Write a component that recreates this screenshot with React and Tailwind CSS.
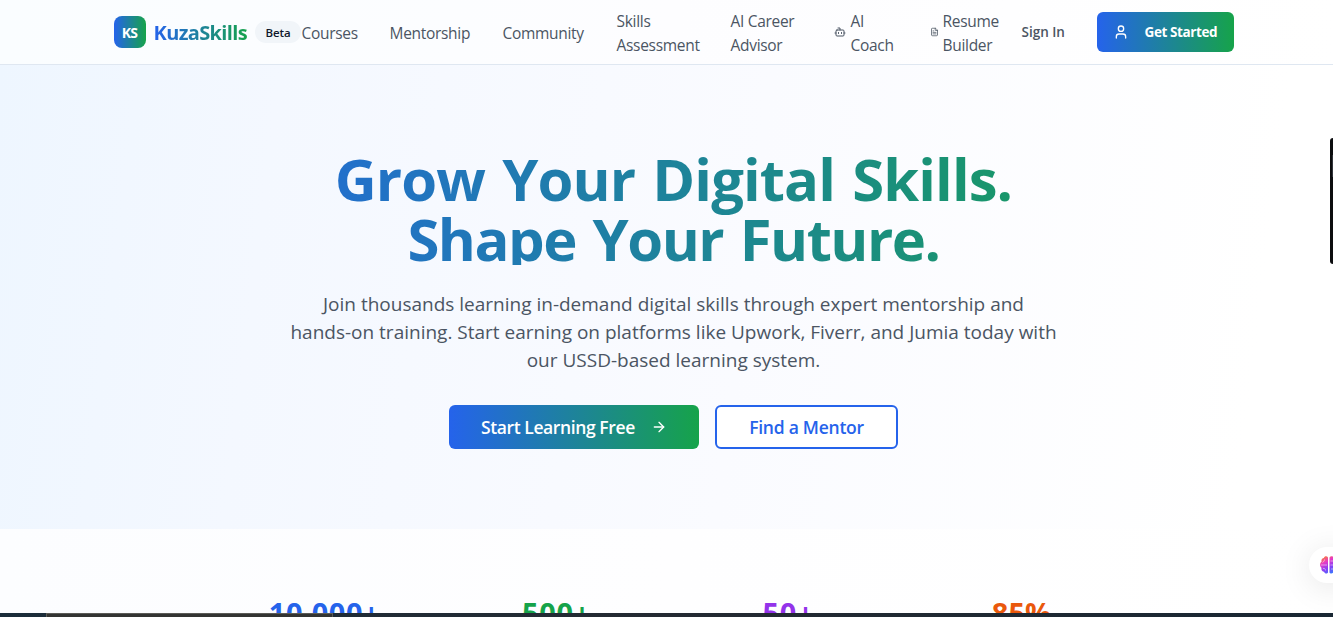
import { ArrowRight, Bot, FileText, User } from 'lucide-react';

const links = [
  { lines: ['Courses'], width: 'w-[88px]' },
  { lines: ['Mentorship'], width: 'w-[113px]' },
  { lines: ['Community'], width: 'w-[114px]' },
  { lines: ['Skills', 'Assessment'], width: 'w-[114px]' },
  { lines: ['AI Career', 'Advisor'], width: 'w-[103px]' },
  { lines: ['AI', 'Coach'], width: 'w-[96px]', icon: <Bot className="w-3 h-3 mr-[5px] shrink-0" /> },
  { lines: ['Resume', 'Builder'], width: 'w-[91px]', icon: <FileText className="w-[9px] h-3 mr-1 shrink-0" /> },
];

const stats = [
  { value: '10,000+', label: 'Active Learners', color: 'text-[#2563eb] pr-0.5 tracking-[0.5px]' },
  { value: '500+', label: 'Expert Mentors', color: 'text-[#16a34a] pr-0.5 tracking-[0.7px]' },
  { value: '50+', label: 'Courses', color: 'text-[#9333ea] pr-0.5 tracking-[0.7px]' },
  { value: '85%', label: 'Success Rate', color: 'text-[#ea580c]' },
];

function Header() {
  return (
    <header className="h-[65px] border-b border-[#dfe7f1] bg-linear-to-r/srgb from-[#fafdff] via-[#fdfdff] to-white">
      <div className="w-[1120px] h-16 mx-auto flex items-center">
        <div className="w-8 h-8 rounded-lg bg-linear-to-r/srgb from-[#2563eb] to-[#16a34a] flex items-center justify-center text-white text-[14px] font-bold tracking-[-0.7px]">
          KS
        </div>
        <span className="ml-2 w-[94px] pt-px text-[20px] font-bold tracking-[-0.65px] whitespace-nowrap bg-linear-to-r/srgb from-[#2563eb] to-[#16a34a] bg-clip-text text-transparent">
          KuzaSkills
        </span>
        <span className="ml-[7px] w-[46px] h-[22px] rounded-full bg-slate-100 text-slate-900 text-[11.5px] font-semibold tracking-[-0.1px] pt-px pl-px flex items-center justify-center shrink-0">
          Beta
        </span>
        <nav className="ml-px flex items-center text-[15.5px] leading-6 text-[#4b5563]">
          {links.map((link) => (
            <a key={link.lines.join(' ')} href="#" className={`flex items-center shrink-0 whitespace-nowrap tracking-[-0.3px] ${link.width}`}>
              {link.icon}
              <span className="relative top-[0.5px]">
                {link.lines.map((line) => (
                  <span key={line} className="block">{line}</span>
                ))}
              </span>
            </a>
          ))}
        </nav>
        <a href="#" className="ml-px w-[45px] pt-px text-[13.5px] font-semibold text-[#4b5563] whitespace-nowrap">Sign In</a>
        <button className="ml-auto w-[137px] h-10 rounded-md bg-linear-to-r/srgb from-[#2563eb] to-[#16a34a] flex items-center pl-4 text-white text-[13.5px] font-bold tracking-[-0.4px] whitespace-nowrap">
          <User className="w-4 h-4 mr-4" />
          Get Started
        </button>
      </div>
    </header>
  );
}

function Hero() {
  return (
    <section className="h-[464px] py-20 bg-[linear-gradient(97deg,#eef6ff_0%,#f4f8ff_20%,#fafbff_55%,#ffffff_92%)]">
      <div className="w-[1120px] mx-auto text-center">
        <h1 className="h-[120px] pt-[4px] text-[58px] leading-[60px] font-bold tracking-[-0.9px] [word-spacing:3px] mb-6 bg-linear-to-r/srgb from-[#2563eb] to-[#16a34a] bg-clip-text text-transparent">
          Grow Your Digital Skills.
          <br />
          <span className="tracking-[-1.5px]">Shape Your Future.</span>
        </h1>
        <p className="relative top-px text-[19px] leading-7 text-[#4b5563] mb-8 whitespace-nowrap">
          <span className="block">Join thousands learning in-demand digital skills through expert mentorship and</span>
          <span className="block">hands-on training. Start earning on platforms like Upwork, Fiverr, and Jumia today with</span>
          <span className="block">our USSD-based learning system.</span>
        </p>
        <div className="flex justify-center gap-4 text-[17.5px] font-semibold">
          <button className="w-[250px] h-11 pl-8 rounded-md bg-linear-to-r/srgb from-[#2563eb] to-[#16a34a] text-white flex items-center whitespace-nowrap">
            <span className="w-[154px] text-left tracking-[-0.4px]">Start Learning Free</span>
            <ArrowRight className="w-4 h-4 ml-4" />
          </button>
          <button className="w-[183px] h-11 rounded-md border-2 border-[#2563eb] bg-white text-[#2563eb] tracking-[-0.25px] whitespace-nowrap">
            Find a Mentor
          </button>
        </div>
      </div>
    </section>
  );
}

function Stats() {
  return (
    <section className="py-16 bg-linear-to-r/srgb from-[#fcfdff] via-[#fefeff] to-white">
      <div className="w-[896px] mx-auto pt-0.5 grid grid-cols-4 gap-8 text-center">
        {stats.map((stat) => (
          <div key={stat.label}>
            <div className={`text-[29px] leading-9 font-bold ${stat.color}`}>{stat.value}</div>
            <div className="text-[#4b5563]">{stat.label}</div>
          </div>
        ))}
      </div>
    </section>
  );
}

function BrainIcon() {
  return (
    <svg className="w-5 h-5" viewBox="0 0 20 20" fill="none">
      <defs>
        <linearGradient id="brain" x1="3" y1="1" x2="13" y2="19" gradientUnits="userSpaceOnUse">
          <stop stopColor="#ff8a1f" />
          <stop offset="0.35" stopColor="#e638c8" />
          <stop offset="0.65" stopColor="#8b3ff5" />
          <stop offset="1" stopColor="#2f7dff" />
        </linearGradient>
      </defs>
      <path
        d="M9 2.5C8 .8 5.400 1 4.800 3 2.800 3.300 2 5.200 2.600 6.700 .6 8 .6 11.500 2.500 12.800 2 15 3.200 16.600 5 16.800 5.800 19 8.300 19 9 17.400ZM10.500 2.500C11.500.8 14.200 1 14.800 3 16.800 3.300 17.600 5.200 17 6.700 19 8 19 11.500 17.100 12.800 17.600 15 16.400 16.600 14.600 16.800 13.800 19 11.200 19 10.500 17.400Z"
        fill="url(#brain)"
      />
      <path d="M3.500 7.500C5 6.500 5.500 5.500 5.500 4.500M2 10H8M4 13.500C5.500 13 6.500 14 6.500 15.500M11.500 6H14M11.500 10H18M12 14H14.500" stroke="#fff" strokeWidth="0.5" />
    </svg>
  );
}

export default function App() {
  return (
    <div className="relative w-full h-[617px] overflow-hidden bg-white font-['Open_Sans',sans-serif]">
      <div className="w-[1347px]">
        <Header />
        <Hero />
        <Stats />
      </div>

      <div className="absolute right-0 top-[138px] w-[3px] h-[126px] rounded-l-[3px] bg-[#0c0d0f]">
        <div className="absolute right-0 top-[17px] w-px h-[22px] bg-[#30343a]" />
      </div>
      <div className="absolute left-[1309px] top-[547px] w-12 h-9 rounded-full bg-white flex items-center pl-2.5 shadow-[0_4px_32px_rgba(0,0,0,0.1)]">
        <BrainIcon />
      </div>
      <div className="absolute inset-x-0 bottom-0 h-1 flex bg-linear-to-r from-[#1b2d3a] via-[#242a32] to-[#192733]">
        <div className="ml-[46px] w-[287px] h-1 border-t border-x border-[#5b5b57] bg-[#333432]" />
      </div>
    </div>
  );
}
